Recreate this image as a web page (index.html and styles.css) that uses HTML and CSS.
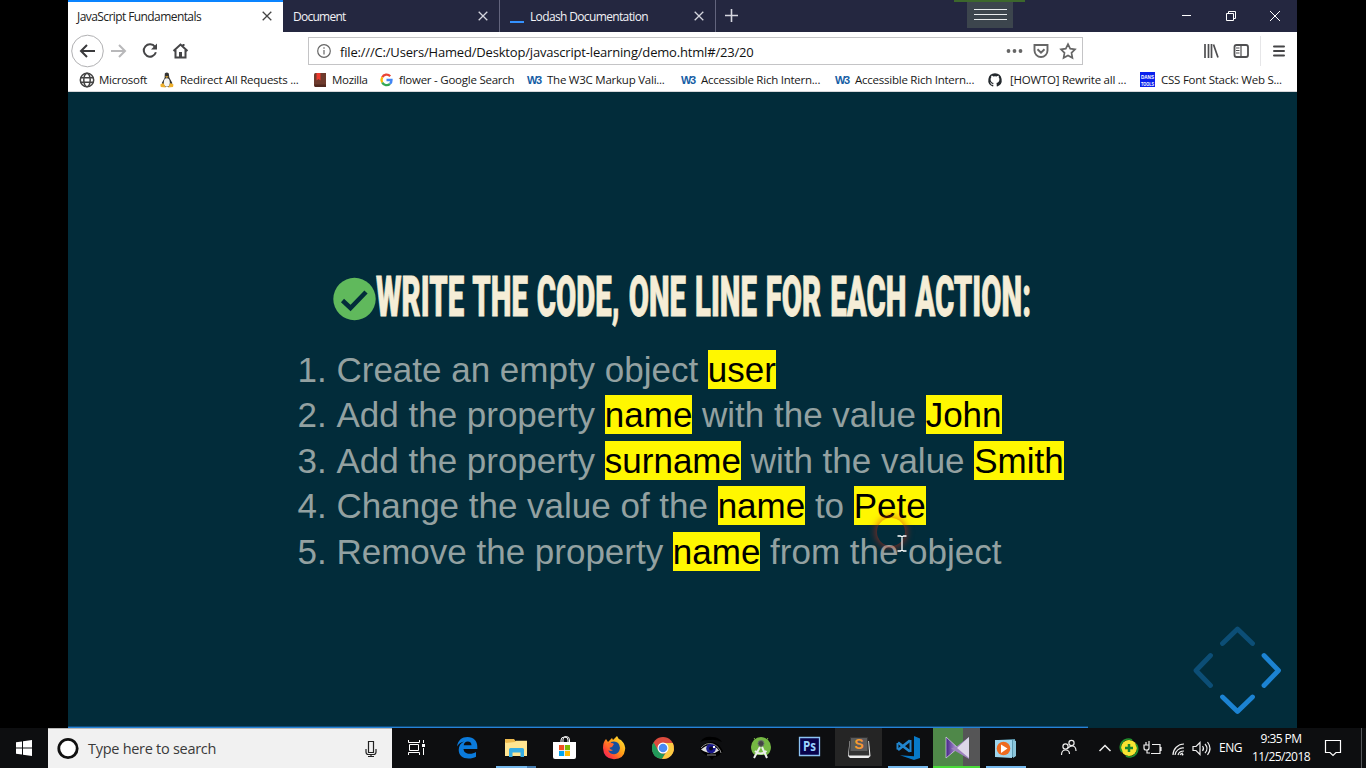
FILE: index.html
```html
<!DOCTYPE html>
<html lang="en">
<head>
<meta charset="utf-8">
<title>JavaScript Fundamentals</title>
<link rel="stylesheet" href="styles.css">
</head>
<body>
<main class="desktop">
  <section class="browser">
    <div class="tabs">
      <div class="tab tab-active"><span class="tab-title t1">JavaScript Fundamentals</span><svg class="close" viewBox="0 0 10 10"><path d="M.7.7l8.6 8.6M9.3.7L.7 9.3"/></svg></div>
      <div class="tab"><span class="tab-title t2">Document</span><svg class="close" viewBox="0 0 10 10"><path d="M.7.7l8.6 8.6M9.3.7L.7 9.3"/></svg></div>
      <div class="tab"><i class="lodash"></i><span class="tab-title t3">Lodash Documentation</span><svg class="close" viewBox="0 0 10 10"><path d="M.7.7l8.6 8.6M9.3.7L.7 9.3"/></svg></div>
      <svg class="new-tab" viewBox="0 0 13 13"><path d="M6.5 0v13M0 6.5h13"/></svg>
      <svg class="window-buttons" viewBox="0 0 118 32"><path d="M3 15.500h9"/><path d="M47.500 13.500h7v7h-7zM49.500 13.500v-2h7v7h-2M91 11l10 10M101 11L91 21"/></svg>
      <div class="recorder"><i></i><i></i><i></i></div>
    </div>
    <div class="toolbar">
      <svg class="nav" viewBox="0 0 130 37">
        <circle cx="19.500" cy="19" r="15.800" fill="#fff" stroke="#b1b1b3"/>
        <path d="M27 19H13.500M19 13l-6 6 6 6" stroke="#3a3a3c" stroke-width="2"/>
        <path d="M43 19h14M51 13l6 6-6 6" stroke="#b8b8ba" stroke-width="2"/>
        <path d="M87 14.800a6.200 6.200 0 1 0 .9 5.500" stroke="#454547" stroke-width="2"/>
        <path d="M89 11.500v6h-6z" fill="#454547"/>
        <path d="M105.500 19l7-6.500 7 6.500M107.500 18v7.500h10V18M115.500 14v-2" stroke="#454547" stroke-width="2"/>
        <path d="M111 20h3v5h-3z" fill="#454547"/>
      </svg>
      <div class="address">
        <svg class="info" viewBox="0 0 14 14"><circle cx="7" cy="7" r="6.300" /><path d="M7 6v4.500M7 3.300v1.400"/></svg>
        <span class="url">file:///C:/Users/Hamed/Desktop/javascript-learning/demo.html#/23/20</span>
        <svg class="page-actions" viewBox="0 0 72 18">
          <g fill="#666"><circle cx="2.500" cy="9" r="1.900"/><circle cx="8.500" cy="9" r="1.900"/><circle cx="14.500" cy="9" r="1.900"/></g>
          <path d="M28.500 3h13v5.500a6.500 6.500 0 0 1-13 0zM31.500 7.300l3.500 3.400 3.500-3.400" stroke="#666" stroke-width="1.900"/>
          <path d="M62 2.200l2.200 4.400 4.800.7-3.500 3.500.9 5-4.400-2.400-4.400 2.400.9-5L55 7.300l4.800-.7z" stroke="#666" stroke-width="1.700"/>
        </svg>
      </div>
      <svg class="tools" viewBox="0 0 100 37">
        <path d="M8 12v14M11.500 12v14M14.500 12v14M16.500 12.500l4.500 13" stroke="#4f4f51" stroke-width="1.700"/>
        <rect x="37.500" y="13" width="13.500" height="12" rx="2" stroke="#4f4f51" stroke-width="1.800"/>
        <path d="M44 13v12M39 16h3.500M39 18.500h3.500M39 21h3.500" stroke="#4f4f51" stroke-width="1.200"/>
        <path d="M63.500 4v30" stroke="#e6e6e8"/>
        <path d="M77 14.500h10M77 19h10M77 23.500h10" stroke="#454547" stroke-width="2" stroke-linecap="round"/>
      </svg>
    </div>
    <div class="bookmarks">
      <div class="bm bm-1"><svg viewBox="0 0 16 16"><g fill="none" stroke="#444" stroke-width="1.500"><circle cx="8" cy="8" r="6.700"/><ellipse cx="8" cy="8" rx="3.200" ry="6.700"/><path d="M1.500 5.800h13M1.500 10.300h13"/></g></svg><span>Microsoft</span></div>
      <div class="bm bm-2"><svg viewBox="0 0 16 16"><path d="M4.800 1.500q2-2 4 0l.5 4 3 5.500-1 4H2.800l-1-4 2.800-5z" fill="#333"/><ellipse cx="6.800" cy="10.500" rx="3" ry="4.300" fill="#f5f5f2"/><path d="M5.100 4.200h3.500L6.800 6zM.3 12.500l3-1.500 2.500 4.500-5-.5zM13.500 12.500l-3-1.500L8 15.500l5-.5z" fill="#eeb02c"/></svg><span>Redirect All Requests ...</span></div>
      <div class="bm bm-3"><svg viewBox="0 0 16 16"><path d="M3.500 1H14v14H3.500Q2 15 2 13V2.500Q2 1 3.500 1z" fill="#6e3b2d"/><path d="M2 12.500h12V15H3z" fill="#51291f"/><path d="M4.500 1h4v7.500L6.500 7l-2 1.500z" fill="#ee3a2e"/></svg><span>Mozilla</span></div>
      <div class="bm bm-4"><svg viewBox="0 0 16 16"><g fill="none" stroke-width="2.300"><path d="M11.200 4.200A4.800 4.800 0 0 0 3.200 5.400" stroke="#ea4335"/><path d="M3.200 5.400a5 5 0 0 0 0 5" stroke="#fbbc05"/><path d="M3.200 10.400a4.900 4.900 0 0 0 7.800 1.400" stroke="#34a853"/><path d="M7.500 8h5a5 5 0 0 1-1.500 3.800" stroke="#4285f4"/></g></svg><span>flower - Google Search</span></div>
      <div class="bm bm-5"><b class="w3">W3</b><span>The W3C Markup Vali...</span></div>
      <div class="bm bm-6"><b class="w3">W3</b><span>Accessible Rich Intern...</span></div>
      <div class="bm bm-7"><b class="w3">W3</b><span>Accessible Rich Intern...</span></div>
      <div class="bm bm-8"><svg viewBox="0 0 16 16"><path fill="#24292e" d="M8 1.200a6.800 6.800 0 0 0-2.200 13.200c.4.100.5-.1.500-.4v-1.300c-1.900.4-2.300-.8-2.300-.8-.3-.8-.8-1-.8-1-.6-.4 0-.4 0-.4.700 0 1.100.7 1.100.7.600 1 1.600.8 2 .6q.1-.6.400-.9c-1.500-.2-3.100-.8-3.100-3.400 0-.8.200-1.400.7-1.900-.1-.2-.3-.9.100-1.800 0 0 .600-.2 1.900.7a6.400 6.400 0 0 1 3.400 0c1.300-.9 1.900-.7 1.900-.7.400.9.200 1.600.1 1.800.5.500.7 1.100.7 1.900 0 2.600-1.600 3.200-3.100 3.400q.5.400.4 1.300V14c0 .3.100.5.500.4A6.800 6.800 0 0 0 8 1.200z"/></svg><span>[HOWTO] Rewrite all ...</span></div>
      <div class="bm bm-9"><svg viewBox="0 0 16 16"><path fill="#0a20ed" d="M0 0h15v15H0z"/><text class="dans" x="1" y="6.500" textLength="13" lengthAdjust="spacingAndGlyphs">DANS</text><text class="dans" x="1" y="13.500" textLength="13" lengthAdjust="spacingAndGlyphs">TOOLS</text></svg><span>CSS Font Stack: Web S...</span></div>
    </div>
    <div class="slide">
      <svg class="headline" viewBox="0 0 700 50">
        <circle cx="21.500" cy="28" r="21.200" fill="#60b95c"/>
        <path d="M9.500 29.500l8 7.500L33 21" fill="none" stroke="#022c3a" stroke-width="4.500"/>
        <text class="headline-text" x="43" y="45" textLength="655" lengthAdjust="spacingAndGlyphs">WRITE THE CODE, ONE LINE FOR EACH ACTION:</text>
      </svg>
      <ol class="steps">
        <li>Create an empty object <mark>user</mark></li>
        <li>Add the property <mark>name</mark> with the value <mark>John</mark></li>
        <li>Add the property <mark>surname</mark> with the value <mark>Smith</mark></li>
        <li>Change the value of the <mark>name</mark> to <mark>Pete</mark></li>
        <li>Remove the property <mark>name</mark> from the object</li>
      </ol>
      <svg class="controls" viewBox="0 0 90 90">
        <g fill="none" stroke="#1c83d2" stroke-width="4.800" stroke-linecap="round" stroke-linejoin="round">
          <path d="M30.500 17.500L45.500 3l15 14.500M18.500 29.500L4 44.500l14.500 15" opacity=".4"/>
          <path d="M72 29.500l14.500 15L72 59.500M30.500 71l15 14.500 15-14.500"/>
        </g>
      </svg>
      <div class="progress"></div>
      <div class="click-ring"></div>
      <svg class="cursor" viewBox="0 0 12 20"><path d="M1.500 2h3l1.500 1 1.500-1h3M6 3v13M1.500 17h3L6 16l1.500 1h3"/></svg>
    </div>
  </section>
  <footer class="taskbar">
    <svg class="start" viewBox="0 0 48 40"><path fill="#fff" d="M16 14.300l6-.9v6.100h-6zM23 13.200l9-1.200v7.500h-9zM16 20.500h6v6.100l-6-.9zM23 20.500h9V28l-9-1.200z"/></svg>
    <div class="search">
      <svg class="cortana" viewBox="0 0 24 24"><circle cx="12" cy="11.500" r="9.200" fill="#fff" stroke="#111" stroke-width="2.800"/></svg>
      <span class="search-text">Type here to search</span>
      <svg class="mic" viewBox="0 0 12 18"><path d="M3.500 1.500h5v11h-5zM1 9v3q0 2.500 2.500 2.500h5q2.500 0 2.500-2.500V9M6 14.500v2M3 16.500h6"/></svg>
    </div>
    <svg class="app" viewBox="0 0 49 40"><path d="M16.500 12v2.500h11V12M16.500 27v-2.500h11V27M17.500 16.500h9v6h-9zM31.500 12v3M31.500 20v7" fill="none" stroke="#fff"/><path d="M30 16h3v3h-3z" fill="#fff"/></svg>
    <svg class="app" viewBox="0 0 49 40"><path fill="#0b7bdc" d="M16 18.500C17 12 21 9 26.500 9c6 0 9.800 4 9.800 9.500V21H22.500c.2 3.200 2.800 4.800 6.200 4.800 2.500 0 4.700-.7 6.300-1.800v4.700c-2 1.200-4.500 1.800-7.500 1.800-6 0-9.800-3.300-9.800-8.500 0-4 2-6.800 5.300-8.400-3.200.6-5.500 2.400-7 4.900zM22.700 17.300h7.800c0-2.500-1.300-3.800-3.700-3.800-2.300 0-3.800 1.300-4.100 3.800z"/></svg>
    <svg class="app" viewBox="0 0 49 40"><path d="M15 11h9l1.500 2H37v15H15z" fill="#edb94d"/><path d="M16 15l9-1 1-1.200h11V28H15V14z" fill="#ffe591"/><path d="M19 29v-7.500q0-1.500 1.500-1.500h12q1.500 0 1.500 1.500V29h-3.500v-4.500h-8V29z" fill="#36ade4"/><path fill="#76b9ed" d="M6 38h31v2H6z"/><path fill="#477db0" d="M37 38h9v2h-9z"/></svg>
    <svg class="app" viewBox="0 0 49 40"><path d="M22 14v-2q0-3 3.500-3t3.500 3v2M24 14v-3q1-3 3.500-2.500 3 .2 3 3.500v2" fill="none" stroke="#fff"/><path fill="#fff" d="M14 14h23v15q0 2-2 2H16q-2 0-2-2z"/><path fill="#f25022" d="M20 17h5.200v5.200H20z"/><path fill="#7fba00" d="M26 17h5v5.200h-5z"/><path fill="#00a4ef" d="M20 23h5.200v5H20z"/><path fill="#ffb900" d="M26 23h5v5h-5z"/></svg>
    <svg class="app" viewBox="0 0 49 40"><defs><linearGradient id="fox" x1="1" y1="0" x2="0" y2="1"><stop stop-color="#fff33b"/><stop offset=".45" stop-color="#ff9d16"/><stop offset=".75" stop-color="#ff4038"/><stop offset="1" stop-color="#e51475"/></linearGradient></defs><path d="M18 11l2 3 4-4 1 2 4-4q1 3 4 4 5 5 4 10-1 9-11 9.300Q15.500 31 15 20q0-6 3-9z" fill="url(#fox)"/><path d="M23 14q8-2 9 6-1 7-7.500 6-4-1-4-4 2 2 4.500 0-3 0-4-3z" fill="#174f9d"/><path d="M20 15q4-1 6 1l-2 3-3 1z" fill="#ff6630"/></svg>
    <svg class="app" viewBox="0 0 49 40"><circle cx="26" cy="20" r="11" fill="#dc4b3e"/><path d="M16.500 14.500L22 25l-1 5q-6-3-6-10 0-3 1.500-5.500z" fill="#229a5a"/><path d="M16.500 14.500l5 8.500q3 4 7 2l-3.500 6Q15 30 15 20q0-3 1.500-5.500z" fill="#229a5a"/><path d="M26 15h9.800q3 7-1.500 12.500-3.500 3.700-9.300 3.500l5.500-9q1.500-4-4.500-7z" fill="#fbcb43"/><circle cx="26" cy="20" r="5.500" fill="#fff"/><circle cx="26" cy="20" r="4.300" fill="#4a8af4"/></svg>
    <svg class="app" viewBox="0 0 49 40"><path d="M14 14q4-6 12-5 7 0 10 5-7-3-12-2-5-.5-10 2zM14 21q5-8 12-7 7 1 11 9-4 6-9 6l-2 3-3-4q-6-1-9-7z" fill="#000"/><path d="M15 21.500q10-9 18 1-7 6-18-1z" fill="#ddd"/><circle cx="25" cy="20.500" r="4.800" fill="#17168d"/><circle cx="25" cy="20.500" r="2" fill="#050520"/><path d="M27 18h2v2h-2z" fill="#fff"/><path d="M15 20q5-6 12-4 4 1 7 6l1 3M21 27h9" fill="none" stroke="#aaa" stroke-width=".8"/></svg>
    <svg class="app" viewBox="0 0 49 40"><path d="M16 19a10 10 0 0 1 20 0q0 5-4 8H20q-4-3-4-8z" fill="#75b843"/><path d="M19 10l1.500 2M33 10l-1.500 2" stroke="#75b843"/><circle cx="26" cy="15.500" r="3" fill="#444" stroke="#69776a"/><path d="M25 19l-6 11M27 19l5 11M20 23q5 5 11.500 0" fill="none" stroke="#ecefeb" stroke-width="2"/></svg>
    <svg class="app" viewBox="0 0 49 40"><path d="M15.500 9.500h20v18h-20z" fill="#08024c" stroke="#8cc3f4" stroke-width="1.300"/><text class="ps-label" x="19" y="23" textLength="13" lengthAdjust="spacingAndGlyphs">Ps</text></svg>
    <svg class="app" viewBox="0 0 49 40"><path fill="#252525" d="M2 0h48v38H2z"/><path d="M16.500 13h19.500l1.500 15-2 2H17l-2-2z" fill="#eee"/><path d="M17 9h18l1.300 18.500H15.700z" fill="#343434"/><path d="M18 10h16l.5 13h-17z" fill="#5c5c5c"/><text class="sublime-s" x="26" y="21">S</text></svg>
    <svg class="app" viewBox="0 0 49 40"><path d="M32 8l6 2.500V30l-6 2-14-4.800 14 1z" fill="#0779c8"/><path d="M16 14.500l12 9M16 22l12-9.500" stroke="#2185ce" stroke-width="2.800"/><path d="M15.500 15v6.500M28.500 12v12" stroke="#2185ce" stroke-width="2"/><path fill="#76b9ed" d="M6 38h40v2H6z"/></svg>
    <svg class="app" viewBox="0 0 49 40"><defs><linearGradient id="ribbon" x2="1"><stop stop-color="#442186"/><stop offset="1" stop-color="#bba8dc"/></linearGradient></defs><path fill="#4f8849" d="M2 0h30v38H2z"/><path fill="#555556" d="M32 0h18v38H32z"/><path d="M15 9l12 11-12 10z" fill="url(#ribbon)" stroke="#ddd5ed" stroke-width=".7"/><path d="M38 9v22L20 20.500 25 19z" fill="#9c82bd"/><path d="M38 9v21L26 20z" fill="#ddd7e8"/><path fill="#48dc38" d="M2 38h48v2H2z"/></svg>
    <svg class="app" viewBox="0 0 49 40"><path d="M18 12l17-1v18H18z" fill="#5c9ab2"/><path d="M15 12h17v18l-17-1z" fill="#9ed5ed"/><path d="M33 12l3 1v15l-3 2z" fill="#8bc5da"/><circle cx="23.500" cy="20.500" r="6.800" fill="#ee6b20"/><path d="M21 16.500l6.500 4-6.500 4.500z" fill="#fff"/><path fill="#76b9ed" d="M6 38h40v2H6z"/></svg>
    <svg class="tray" viewBox="0 0 186 40">
      <g fill="none" stroke="#eee" stroke-width="1.200">
        <circle cx="35.500" cy="18.500" r="2.600"/><circle cx="41.500" cy="15" r="2.600"/><path d="M31.500 27q0-5 4-5t4 4M38 20q2-2 4-2 4 0 4 5"/>
        <path d="M69.500 23l5.500-5.500 5.500 5.500" stroke-width="1.500"/>
        <path d="M122 16.500h8v9h-9M119 13v4h-3v-3M119 17v3q0 2-2 2h-1q-2 0-2-2v-3h2M117 22v3h3M131 19v4"/>
        <path d="M143 27a11 11 0 0 1 11-11M145 27a8 8 0 0 1 9-7M148 27q1-4 6-4M150 27q1-2 3-2"/>
        <path d="M163 18.500h3l4-4v12l-4-4h-3zM172.500 18q2 2.500 0 5M175 16q4 4.500 0 9M177.500 14q5 6.500 0 13"/>
      </g>
      <circle cx="99" cy="20" r="8" fill="#f8e431"/><path d="M92 24a8 8 0 0 1 10-12M106 16a8 8 0 0 1-10 12" fill="none" stroke="#23922e" stroke-width="1.800"/><path d="M99 16v8M95 20h8" stroke="#16852f" stroke-width="2.500"/>
      <circle cx="152.500" cy="26.500" r="1" fill="#fff"/>
    </svg>
    <span class="lang">ENG</span>
    <div class="clock"><span>9:35 PM</span><span>11/25/2018</span></div>
    <svg class="notice" viewBox="0 0 20 20"><path d="M2.500 2.500h15v12H13l-3 3-3-3H2.500z"/></svg>
    <i class="peek"></i>
  </footer>
</main>
</body>
</html>
```
FILE: styles.css
```css
* { box-sizing: border-box; }
body { margin: 0; background: #000; font-family: "Open Sans", "Noto Sans", sans-serif; }
svg { display: block; flex: none; }
.desktop { width: 1366px; height: 768px; overflow: hidden; display: flex; flex-direction: column; }
.browser { width: 1229px; height: 728px; margin-left: 68px; background: #fff; }

.tabs { position: relative; height: 32px; background: #242740; display: flex; }
.tab { width: 216px; display: flex; align-items: center; padding: 0 11px 0 10px; color: #f2f2f6; font-size: 12px; border-right: 1px solid #62647d; white-space: nowrap; }
.tab-active { width: 215px; background: #fff; color: #222; border-top: 2px solid #0a84ff; border-right: 0; padding: 0 11px 2px 9px; }
.tab + .tab { padding-right: 11px; }
.tab-active + .tab { width: 217px; }
.t1 { letter-spacing: -.58px; }
.t2 { letter-spacing: -.75px; }
.t3 { letter-spacing: -.64px; }
.close { width: 10px; height: 10px; margin-left: auto; fill: none; stroke: #d4d5dd; stroke-width: 1.300; }
.tab-active .close { stroke: #444; }
.lodash { width: 14px; height: 2px; background: #3492ff; margin: 12px 6px 0 0; }
.new-tab { width: 13px; height: 13px; margin: 9px 0 0 9px; stroke: #d5d6df; stroke-width: 1.600; }
.window-buttons { width: 118px; height: 32px; margin-left: auto; fill: none; stroke: #fff; }
.recorder { position: absolute; left: 899px; top: 0; width: 46px; height: 28px; background: #3c454d; padding: 9px 6px 0 7px; display: flex; flex-direction: column; gap: 4px; }
.recorder::before { content: ""; position: absolute; left: -13px; top: 0; width: 71px; height: 2px; background: #3c672c; }
.recorder i { height: 1px; background: #e9ecee; flex: none; }

.toolbar { height: 37px; display: flex; }
.nav { width: 130px; height: 37px; fill: none; }
.address { width: 775px; height: 28px; margin: 5px 0 0 110px; border: 1px solid #c4c4c6; display: flex; align-items: center; padding: 0 4px 0 8px; }
.info { width: 14px; height: 14px; fill: none; stroke: #666; stroke-width: 1.200; }
.url { margin: 1px 0 0 9px; color: #111; font-size: 13px; letter-spacing: -.18px; white-space: nowrap; }
.page-actions { width: 72px; height: 18px; margin-left: auto; fill: none; }
.tools { width: 100px; height: 37px; margin-left: auto; fill: none; }

.bookmarks { height: 23px; display: grid; grid-template-columns: 81px 152px 67px 148px 154px 154px 152px 153px 150px; padding: 0 0 1px 11px; border-bottom: 1px solid #d7d7d9; }
.bm { display: flex; align-items: center; gap: 4px; font-size: 11.500px; letter-spacing: -.24px; color: #181818; white-space: nowrap; }
.bm svg { width: 16px; height: 16px; }
.bm-3 span, .bm-1 span { letter-spacing: -.3px; }
.bm-8 { gap: 7px; }
.bm-9 { gap: 5px; }
.w3 { width: 16px; color: #155da4; font: bold 11px/14px "Liberation Sans", sans-serif; letter-spacing: -1.500px; }
.dans { font: bold 6px "Liberation Sans", sans-serif; letter-spacing: 0; fill: #fff; }

.slide { position: relative; height: 636px; background: #022c3a; padding-top: 179px; }
.headline { width: 700px; height: 50px; margin-left: 265px; overflow: visible; }
.headline-text { font: 900 55px Roboto, sans-serif; word-spacing: 3px; fill: #f5edd6; stroke: #f5edd6; stroke-width: .8px; }
.steps { margin: 25.600px 0 0; padding: 0 0 0 268.500px; color: #93a1a1; font: 35px/45.500px "Liberation Sans", Arial, sans-serif; letter-spacing: -.01px; white-space: nowrap; }
mark { background: #fff700; color: #000; }
.controls { position: absolute; left: 1124px; top: 534px; width: 90px; height: 90px; }
.progress { position: absolute; left: 0; bottom: 0; width: 1020px; height: 2px; background: linear-gradient(#0f4b78 50%, #2583d6 50%); }
.click-ring { position: absolute; left: 809px; top: 426px; width: 28px; height: 28px; border-radius: 50%; box-shadow: 0 0 7px 2px rgba(210, 45, 20, .55); }
.cursor { position: absolute; left: 828px; top: 442px; width: 12px; height: 20px; fill: none; stroke: #fff; stroke-width: 1.300; }

.taskbar { height: 40px; background: #0d0e10; display: flex; color: #fff; }
.start { width: 48px; height: 40px; }
.search { width: 344px; height: 40px; background: #f1f1f1; border-top: 1px solid #b9b9b9; display: flex; align-items: center; padding: 0 15px 0 8px; }
.cortana { width: 24px; height: 24px; }
.search-text { margin-left: 8px; color: #3a3a3a; font-size: 14.500px; letter-spacing: -.28px; }
.mic { width: 12px; height: 18px; margin-left: auto; fill: none; stroke: #222; stroke-width: 1.200; }
.app { width: 49px; height: 40px; }
.ps-label { font: bold 14px "Open Sans", sans-serif; fill: #9bd2ff; }
.sublime-s { font: bold 14px "Liberation Sans", sans-serif; fill: #f79a31; text-anchor: middle; }
.tray { width: 186px; height: 40px; margin-left: 1px; }
.lang { width: 29px; margin-left: 3px; font-size: 12px; line-height: 39px; letter-spacing: -.5px; }
.clock { width: 66px; display: flex; flex-direction: column; align-items: center; padding-top: 2px; font-size: 12px; line-height: 18px; letter-spacing: -.58px; }
.notice { width: 20px; height: 20px; margin: 10px 0 0 9px; fill: none; stroke: #fff; stroke-width: 1.200; }
.peek { width: 1px; margin-left: 18px; background: #55575b; }
```
